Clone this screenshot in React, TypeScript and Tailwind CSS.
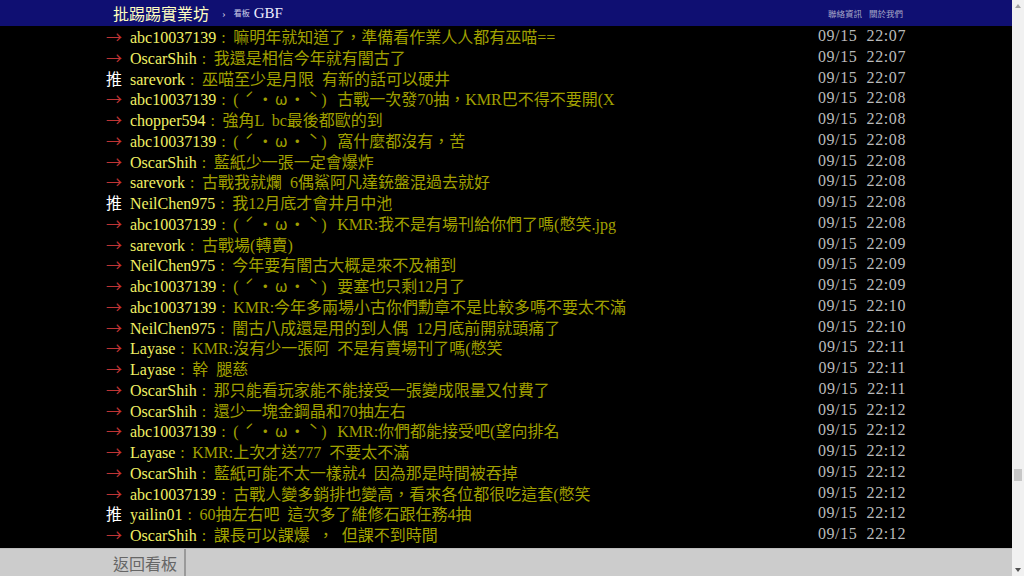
import React from 'react';

type Push = { tag: '推' | '→'; user: string; kao?: boolean; text: string; time: string };

const pushes: Push[] = [
  { tag: '→', user: 'abc10037139', text: '嘛明年就知道了，準備看作業人人都有巫喵==', time: '09/15  22:07' },
  { tag: '→', user: 'OscarShih', text: '我還是相信今年就有闇古了', time: '09/15  22:07' },
  { tag: '推', user: 'sarevork', text: '巫喵至少是月限 有新的話可以硬井', time: '09/15  22:07' },
  { tag: '→', user: 'abc10037139', kao: true, text: '古戰一次發70抽，KMR巴不得不要開(X', time: '09/15  22:08' },
  { tag: '→', user: 'chopper594', text: '強角L bc最後都歐的到', time: '09/15  22:08' },
  { tag: '→', user: 'abc10037139', kao: true, text: '窩什麼都沒有，苦', time: '09/15  22:08' },
  { tag: '→', user: 'OscarShih', text: '藍紙少一張一定會爆炸', time: '09/15  22:08' },
  { tag: '→', user: 'sarevork', text: '古戰我就爛 6偶鯊阿凡達銃盤混過去就好', time: '09/15  22:08' },
  { tag: '推', user: 'NeilChen975', text: '我12月底才會井月中池', time: '09/15  22:08' },
  { tag: '→', user: 'abc10037139', kao: true, text: 'KMR:我不是有場刊給你們了嗎(憋笑.jpg', time: '09/15  22:08' },
  { tag: '→', user: 'sarevork', text: '古戰場(轉賣)', time: '09/15  22:09' },
  { tag: '→', user: 'NeilChen975', text: '今年要有闇古大概是來不及補到', time: '09/15  22:09' },
  { tag: '→', user: 'abc10037139', kao: true, text: '要塞也只剩12月了', time: '09/15  22:09' },
  { tag: '→', user: 'abc10037139', text: 'KMR:今年多兩場小古你們勳章不是比較多嗎不要太不滿', time: '09/15  22:10' },
  { tag: '→', user: 'NeilChen975', text: '闇古八成還是用的到人偶 12月底前開就頭痛了', time: '09/15  22:10' },
  { tag: '→', user: 'Layase', text: 'KMR:沒有少一張阿 不是有賣場刊了嗎(憋笑', time: '09/15  22:11' },
  { tag: '→', user: 'Layase', text: '幹 腿慈', time: '09/15  22:11' },
  { tag: '→', user: 'OscarShih', text: '那只能看玩家能不能接受一張變成限量又付費了', time: '09/15  22:11' },
  { tag: '→', user: 'OscarShih', text: '還少一塊金鋼晶和70抽左右', time: '09/15  22:12' },
  { tag: '→', user: 'abc10037139', kao: true, text: 'KMR:你們都能接受吧(望向排名', time: '09/15  22:12' },
  { tag: '→', user: 'Layase', text: 'KMR:上次才送777 不要太不滿', time: '09/15  22:12' },
  { tag: '→', user: 'OscarShih', text: '藍紙可能不太一樣就4 因為那是時間被吞掉', time: '09/15  22:12' },
  { tag: '→', user: 'abc10037139', text: '古戰人變多銷排也變高，看來各位都很吃這套(憋笑', time: '09/15  22:12' },
  { tag: '推', user: 'yailin01', text: '60抽左右吧 這次多了維修石跟任務4抽', time: '09/15  22:12' },
  { tag: '→', user: 'OscarShih', text: '課長可以課爆 ， 但課不到時間', time: '09/15  22:12' },
];

// (ˊ・ω・ˋ) drawn in full-width cells like the BBS font does
function Kao() {
  return (
    <span className="mr-[8px]">
      <span className="inline-block w-[8px]">(</span>
      {['ˊ', '・', 'ω', '・', 'ˋ'].map((c, i) => (
        <span key={i} className="inline-block w-[16px] text-center font-['Noto_Sans_CJK_TC',sans-serif]">
          {c}
        </span>
      ))}
      <span className="inline-block w-[8px]">)</span>
    </span>
  );
}

function PushRow({ p }: { p: Push }) {
  return (
    <div className="h-[20.75px] whitespace-nowrap leading-[20.75px]">
      <span
        className={
          p.tag === '推'
            ? "inline-block w-[24px] font-['Noto_Sans_CJK_TC',sans-serif] text-white"
            : "inline-block w-[24px] font-['Noto_Sans_CJK_TC',sans-serif] text-[#bf3434]"
        }
      >
        {p.tag}
      </span>
      <span className="text-[#f0f064]">{p.user}</span>
      <span className="text-[#a0a000] [word-spacing:4px]">
        <span className="inline-block w-[17px] pl-[5px]">:</span>
        {p.kao && <Kao />}
        {p.text}
      </span>
      <span className="float-right whitespace-pre tracking-[0.6px] text-[#bbbbbb]">{p.time}</span>
    </div>
  );
}

export default function App() {
  return (
    <div className="flex h-[576px] w-full overflow-hidden bg-black font-['Liberation_Serif','Noto_Sans_CJK_TC',serif]">
      <div className="flex min-w-0 flex-1 flex-col">
        {/* top bar */}
        <div className="h-[26px] shrink-0 bg-[#0f0f72]">
          <div className="mx-auto flex h-full w-[800px] items-center pl-[7px] pr-[3px]">
            <span className="font-['Noto_Sans_CJK_TC',sans-serif] text-[16px] leading-none text-[#ffffc0]">批踢踢實業坊</span>
            <span className="ml-[13px] text-[11px] leading-none text-[#c8c8e0]">›</span>
            <span className="ml-[8px] font-['Noto_Sans_CJK_TC',sans-serif] text-[8px] leading-none text-[#d0d0e8]">看板</span>
            <span className="ml-[4px] text-[15px] leading-none text-[#eeeeff]">GBF</span>
            <div className="ml-auto flex gap-[7px] font-['Noto_Sans_CJK_TC',sans-serif] text-[8.5px] leading-none text-[#a8a8c8]">
              <span>聯絡資訊</span>
              <span>關於我們</span>
            </div>
          </div>
        </div>

        {/* push list */}
        <div className="min-h-0 flex-1 overflow-hidden">
          <div className="mx-auto w-[800px] text-[16px]">
            {pushes.map((p, i) => (
              <PushRow key={i} p={p} />
            ))}
          </div>
        </div>

        {/* bottom bar */}
        <div className="h-[28px] shrink-0 border-t border-[#bdbdbd] bg-[#cccccc]">
          <div className="mx-auto flex h-full w-[800px]">
            <div className="flex w-[80px] items-center justify-center border-r-2 border-[#9a9a9a] font-['Noto_Sans_CJK_TC',sans-serif] text-[16px] text-[#666666]">
              返回看板
            </div>
          </div>
        </div>
      </div>

      {/* scrollbar */}
      <div className="flex w-[12px] shrink-0 flex-col bg-[#f1f1f1]">
        <div className="flex h-[12px] items-center justify-center">
          <svg width="6" height="4" viewBox="0 0 6 4">
            <path d="M3 0 L6 4 L0 4 Z" fill="#a3a3a3" />
          </svg>
        </div>
        <div className="flex-1">
          <div className="ml-[2px] mt-[457px] h-[12px] w-[8px] bg-[#c8c8c8]" />
        </div>
        <div className="flex h-[12px] items-center justify-center">
          <svg width="6" height="4" viewBox="0 0 6 4">
            <path d="M0 0 L6 0 L3 4 Z" fill="#505050" />
          </svg>
        </div>
      </div>
    </div>
  );
}
